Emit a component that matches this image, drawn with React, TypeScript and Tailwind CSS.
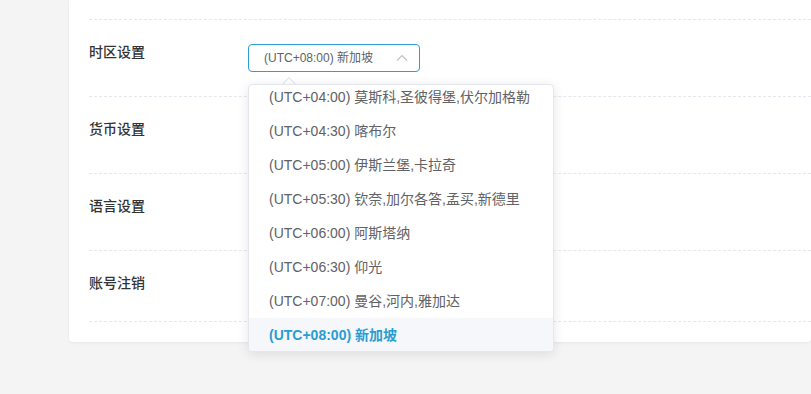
import React from "react";

const items = [
  "(UTC+04:00) 莫斯科,圣彼得堡,伏尔加格勒",
  "(UTC+04:30) 喀布尔",
  "(UTC+05:00) 伊斯兰堡,卡拉奇",
  "(UTC+05:30) 钦奈,加尔各答,孟买,新德里",
  "(UTC+06:00) 阿斯塔纳",
  "(UTC+06:30) 仰光",
  "(UTC+07:00) 曼谷,河内,雅加达",
  "(UTC+08:00) 新加坡",
];

const font = {
  fontFamily:
    '"Helvetica Neue", "Liberation Sans", Arial, "Noto Sans CJK SC", sans-serif',
};

export default function App() {
  return (
    <div
      className="w-full h-[394px] bg-[#f4f4f5] overflow-hidden"
      style={font}
    >
      <div className="ml-[69px] bg-white rounded-b-[4px] shadow-[0_1px_3px_rgba(0,0,0,0.06)] pl-[20px] pb-[20px]">
        <div className="h-[20px] border-b border-dashed border-[#e4e7ed]" />
        {/* 时区设置 */}
        <div className="h-[77px] border-b border-dashed border-[#e4e7ed] flex">
          <div className="w-[159px] pt-[24px] text-[14px] leading-[16px] font-medium text-[#333]">
            时区设置
          </div>
          <div className="pt-[24px] relative">
            <div className="w-[172px] h-[28px] border border-[#2d9fd0] rounded-[4px] flex items-center justify-between pl-[15px] pr-[11px]">
              <span className="text-[12px] text-[#606266]">
                (UTC+08:00) 新加坡
              </span>
              <svg width="12" height="8" viewBox="0 0 12 8">
                <path
                  d="M1 6.5 L6 1.5 L11 6.5"
                  fill="none"
                  stroke="#c0c4cc"
                  strokeWidth="1.2"
                />
              </svg>
            </div>
            <div className="absolute left-0 top-[64px] z-10">
              <div className="absolute left-[36px] -top-[5px] w-[10px] h-[10px] bg-white border-l border-t border-[#e4e7ed] rotate-45" />
              <div className="relative w-[306px] h-[268px] overflow-hidden bg-white border border-[#e4e7ed] rounded-[4px] shadow-[0_2px_12px_rgba(0,0,0,0.1)]">
                <div className="-mt-[5px]">
                  {items.map((t, i) => {
                    const sel = i === items.length - 1;
                    return (
                      <div
                        key={t}
                        className={
                          sel
                            ? "h-[34px] leading-[34px] pl-[20px] text-[14px] font-bold text-[#2a9dd2] bg-[#f5f7fa]"
                            : "h-[34px] leading-[34px] pl-[20px] text-[14px] text-[#606266]"
                        }
                      >
                        {t}
                      </div>
                    );
                  })}
                </div>
              </div>
            </div>
          </div>
        </div>
        {/* 货币设置 */}
        <div className="h-[77px] border-b border-dashed border-[#e4e7ed]">
          <div className="pt-[24px] text-[14px] leading-[16px] font-medium text-[#333]">
            货币设置
          </div>
        </div>
        <div className="h-[77px] border-b border-dashed border-[#e4e7ed]">
          <div className="pt-[24px] text-[14px] leading-[16px] font-medium text-[#333]">
            语言设置
          </div>
        </div>
        <div className="h-[71px] border-b border-dashed border-[#e4e7ed]">
          <div className="pt-[24px] text-[14px] leading-[16px] font-medium text-[#333]">
            账号注销
          </div>
        </div>
      </div>
    </div>
  );
}
